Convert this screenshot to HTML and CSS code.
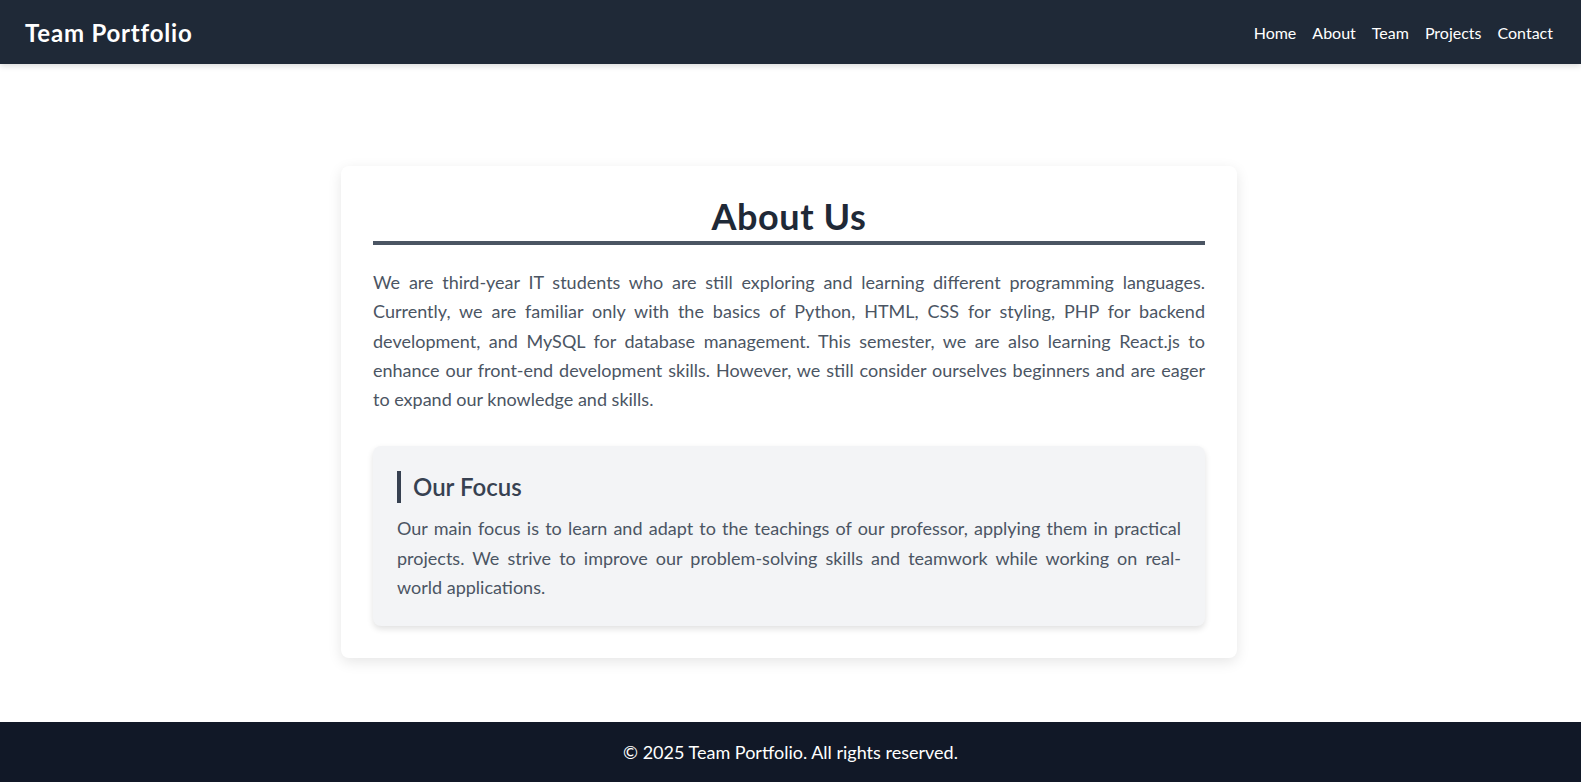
FILE: index.html
```html
<!DOCTYPE html>
<html lang="en">
<head>
<meta charset="utf-8">
<title>Team Portfolio - About</title>
<link rel="stylesheet" href="styles.css">
</head>
<body>
<header class="site-header">
  <div class="logo">Team Portfolio</div>
  <nav class="nav">
    <a href="#">Home</a>
    <a href="#">About</a>
    <a href="#">Team</a>
    <a href="#">Projects</a>
    <a href="#">Contact</a>
  </nav>
</header>
<main class="main">
  <section class="card">
    <h1 class="title">About Us</h1>
    <p class="text">We are third-year IT students who are still exploring and learning different programming languages. Currently, we are familiar only with the basics of Python, HTML, CSS for styling, PHP for backend development, and MySQL for database management. This semester, we are also learning React.js to enhance our front-end development skills. However, we still consider ourselves beginners and are eager to expand our knowledge and skills.</p>
    <div class="focus">
      <h2 class="focus-title">Our Focus</h2>
      <p class="text">Our main focus is to learn and adapt to the teachings of our professor, applying them in practical projects. We strive to improve our problem-solving skills and teamwork while working on real-world applications.</p>
    </div>
  </section>
</main>
<footer class="site-footer">© 2025 Team Portfolio. All rights reserved.</footer>
</body>
</html>
```
FILE: styles.css
```css
* { box-sizing: border-box; }
html, body { margin: 0; padding: 0; }
body {
  font-family: Lato, "Noto Sans", sans-serif;
  background: #ffffff;
  color: #1f2937;
  min-height: 782px;
  display: flex;
  flex-direction: column;
}
.site-header {
  height: 64px;
  background: #1f2937;
  display: flex;
  align-items: center;
  justify-content: space-between;
  padding: 0 28px 0 25px;
  box-shadow: 0 2px 6px rgba(0,0,0,0.15);
  position: relative;
  z-index: 1;
}
.logo {
  color: #ffffff;
  font-size: 24px;
  font-weight: 700;
  letter-spacing: 0.8px;
}
.nav {
  display: flex;
  gap: 16px;
}
.nav a {
  color: #ffffff;
  text-decoration: none;
  font-size: 16px;
}
.main {
  flex: 1;
  padding: 102px 0 64px;
  display: flex;
  justify-content: center;
  align-items: flex-start;
}
.card {
  width: 896px;
  margin-left: -3px;
  background: #ffffff;
  border-radius: 8px;
  box-shadow: 0 4px 14px rgba(0,0,0,0.1);
  padding: 28px 32px 32px;
}
.title {
  margin: 0 0 23px;
  text-align: center;
  font-size: 36px;
  font-weight: 700;
  color: #1f2937;
  line-height: 44px;
  letter-spacing: 0.6px;
  border-bottom: 4px solid #4b5563;
  padding-bottom: 3px;
}
.text {
  margin: 0;
  font-size: 18px;
  line-height: 29.25px;
  color: #4b5563;
  text-align: justify;
}
.focus {
  margin-top: 32px;
  background: #f3f4f6;
  border-radius: 8px;
  padding: 25px 24px 24px;
  box-shadow: 0 3px 6px rgba(0,0,0,0.12);
}
.focus-title {
  margin: 0 0 11px;
  font-size: 24px;
  font-weight: 600;
  line-height: 32px;
  color: #374151;
  border-left: 4px solid #374151;
  padding-left: 12px;
}
.site-footer {
  height: 60px;
  background: #111827;
  color: #ffffff;
  font-size: 18px;
  display: flex;
  align-items: center;
  justify-content: center;
}
```
